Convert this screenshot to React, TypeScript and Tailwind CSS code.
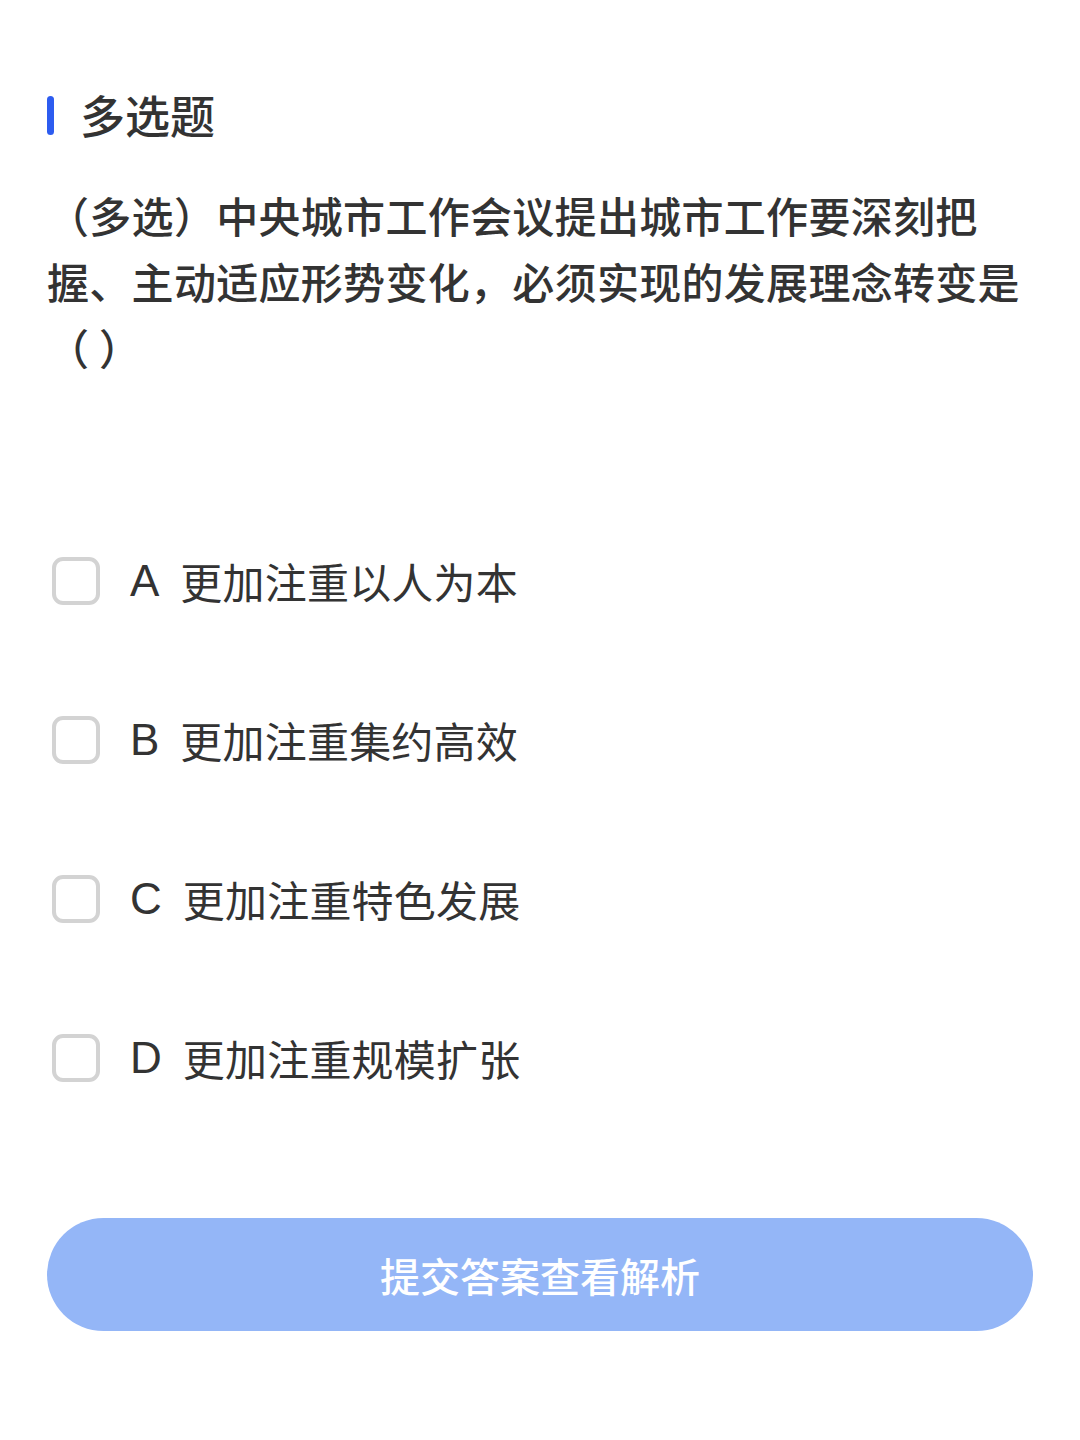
const options = [
  { key: "A", text: "更加注重以人为本" },
  { key: "B", text: "更加注重集约高效" },
  { key: "C", text: "更加注重特色发展" },
  { key: "D", text: "更加注重规模扩张" },
];

export default function App() {
  return (
    <div
      className="w-[1080px] h-[1440px] bg-white px-[47px] text-[#333333]"
      style={{ fontFamily: '"Noto Sans CJK SC", "Noto Sans", sans-serif' }}
    >
      {/* Title */}
      <div className="pt-[85px] flex items-center">
        <div className="w-[7px] h-[39px] rounded-full bg-[#2d5cf0]" />
        <h1 className="ml-[26px] text-[45px] leading-[60px] font-medium text-[#333333]">多选题</h1>
      </div>

      {/* Question */}
      <p className="mt-[37px] text-[42px] leading-[66px] font-medium tracking-[0.3px]">
        （多选）中央城市工作会议提出城市工作要深刻把握、主动适应形势变化，必须实现的发展理念转变是（ ）
      </p>

      {/* Options */}
      <div className="mt-[121px] flex flex-col">
        {options.map((o) => (
          <div key={o.key} className="flex items-center h-[159px]">
            <div className="w-[48px] h-[48px] rounded-[11px] border-[4px] border-[#d3d3d3] ml-[5px] shrink-0" />
            <span
              className="ml-[30px] text-[44px] leading-none"
              style={{ fontFamily: '"Liberation Sans", Arial, sans-serif' }}
            >
              {o.key}
            </span>
            <span className="ml-[21px] text-[42px] leading-none tracking-[0.2px]">{o.text}</span>
          </div>
        ))}
      </div>

      {/* Submit */}
      <button className="mt-[81px] w-full h-[113px] rounded-full bg-[#94b6f7] text-white text-[40px] font-medium">
        提交答案查看解析
      </button>
    </div>
  );
}
